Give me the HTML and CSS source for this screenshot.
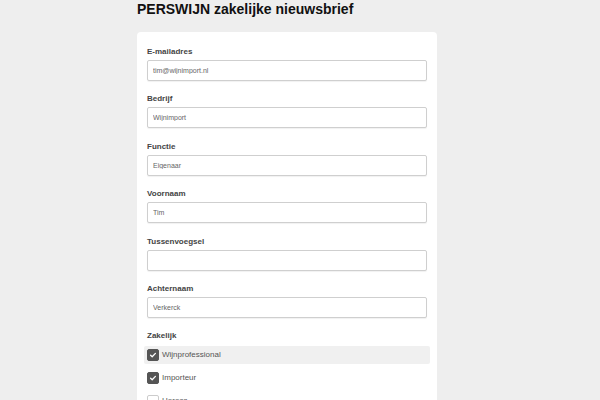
FILE: index.html
```html
<!DOCTYPE html>
<html lang="nl">
<head>
<meta charset="utf-8">
<title>PERSWIJN zakelijke nieuwsbrief</title>
<link rel="stylesheet" href="styles.css">
</head>
<body>
<div class="page">
  <h1 class="title">PERSWIJN zakelijke nieuwsbrief</h1>
  <form class="card">
    <div class="field">
      <label class="label">E-mailadres</label>
      <input class="input" type="text" value="tim@wijnimport.nl">
    </div>
    <div class="field">
      <label class="label">Bedrijf</label>
      <input class="input" type="text" value="Wijnimport">
    </div>
    <div class="field">
      <label class="label">Functie</label>
      <input class="input" type="text" value="Eigenaar">
    </div>
    <div class="field">
      <label class="label">Voornaam</label>
      <input class="input" type="text" value="Tim">
    </div>
    <div class="field">
      <label class="label">Tussenvoegsel</label>
      <input class="input" type="text" value="">
    </div>
    <div class="field">
      <label class="label">Achternaam</label>
      <input class="input" type="text" value="Verkerck">
    </div>
    <div class="group">
      <div class="label group-label">Zakelijk</div>
      <div class="options">
        <div class="option option-hover">
          <span class="box checked"><svg viewBox="0 0 12 12" width="12" height="12"><path d="M3.6 6.2 L5.2 7.7 L8.4 4.4" fill="none" stroke="#fff" stroke-width="1.3" stroke-linecap="round" stroke-linejoin="round"/></svg></span>
          <span class="option-text">Wijnprofessional</span>
        </div>
        <div class="option">
          <span class="box checked"><svg viewBox="0 0 12 12" width="12" height="12"><path d="M3.6 6.2 L5.2 7.7 L8.4 4.4" fill="none" stroke="#fff" stroke-width="1.3" stroke-linecap="round" stroke-linejoin="round"/></svg></span>
          <span class="option-text">Importeur</span>
        </div>
        <div class="option">
          <span class="box"></span>
          <span class="option-text">Horeca</span>
        </div>
      </div>
    </div>
  </form>
</div>
</body>
</html>
```
FILE: styles.css
```css
html, body {
  margin: 0;
  padding: 0;
  background: #eeeeee;
  font-family: "Liberation Sans", Arial, sans-serif;
}

.page {
  width: 300px;
  margin-left: 137px;
  padding-top: 1px;
}

.title {
  margin: 0 0 15px 0;
  font-size: 14px;
  line-height: 16px;
  font-weight: bold;
  color: #111;
}

.card {
  background: #ffffff;
  border-radius: 4px;
  padding: 15px 10px 20px 10px;
  display: flex;
  flex-direction: column;
}

.field {
  display: flex;
  flex-direction: column;
  margin-bottom: 13.4px;
}

.label {
  font-size: 8px;
  line-height: 10px;
  font-weight: bold;
  color: #444;
  margin-bottom: 3px;
}

.input {
  box-sizing: border-box;
  width: 280px;
  height: 21px;
  margin: 0;
  padding: 0 5px;
  border: 1px solid #cfcfcf;
  border-radius: 2px;
  box-shadow: 0 1px 1px rgba(0, 0, 0, 0.06);
  background: #fff;
  font-family: "Liberation Sans", Arial, sans-serif;
  font-size: 7px;
  color: #666;
  outline: none;
}

.group-label {
  margin-bottom: 5px;
}

.options {
  display: flex;
  flex-direction: column;
  gap: 5px;
  margin: 0 -3px;
}

.option {
  display: flex;
  align-items: center;
  gap: 3px;
  height: 18px;
  padding-left: 3px;
  border-radius: 2px;
}

.option-hover {
  background: #f0f0f0;
}

.box {
  box-sizing: border-box;
  width: 12px;
  height: 12px;
  border-radius: 2px;
  border: 1px solid #cccccc;
  background: #fff;
  display: flex;
  align-items: center;
  justify-content: center;
}

.box svg {
  display: block;
  flex: none;
}

.box.checked {
  background: #555555;
  border-color: #555555;
}

.option-text {
  font-size: 8px;
  line-height: 10px;
  color: #555;
}
```
